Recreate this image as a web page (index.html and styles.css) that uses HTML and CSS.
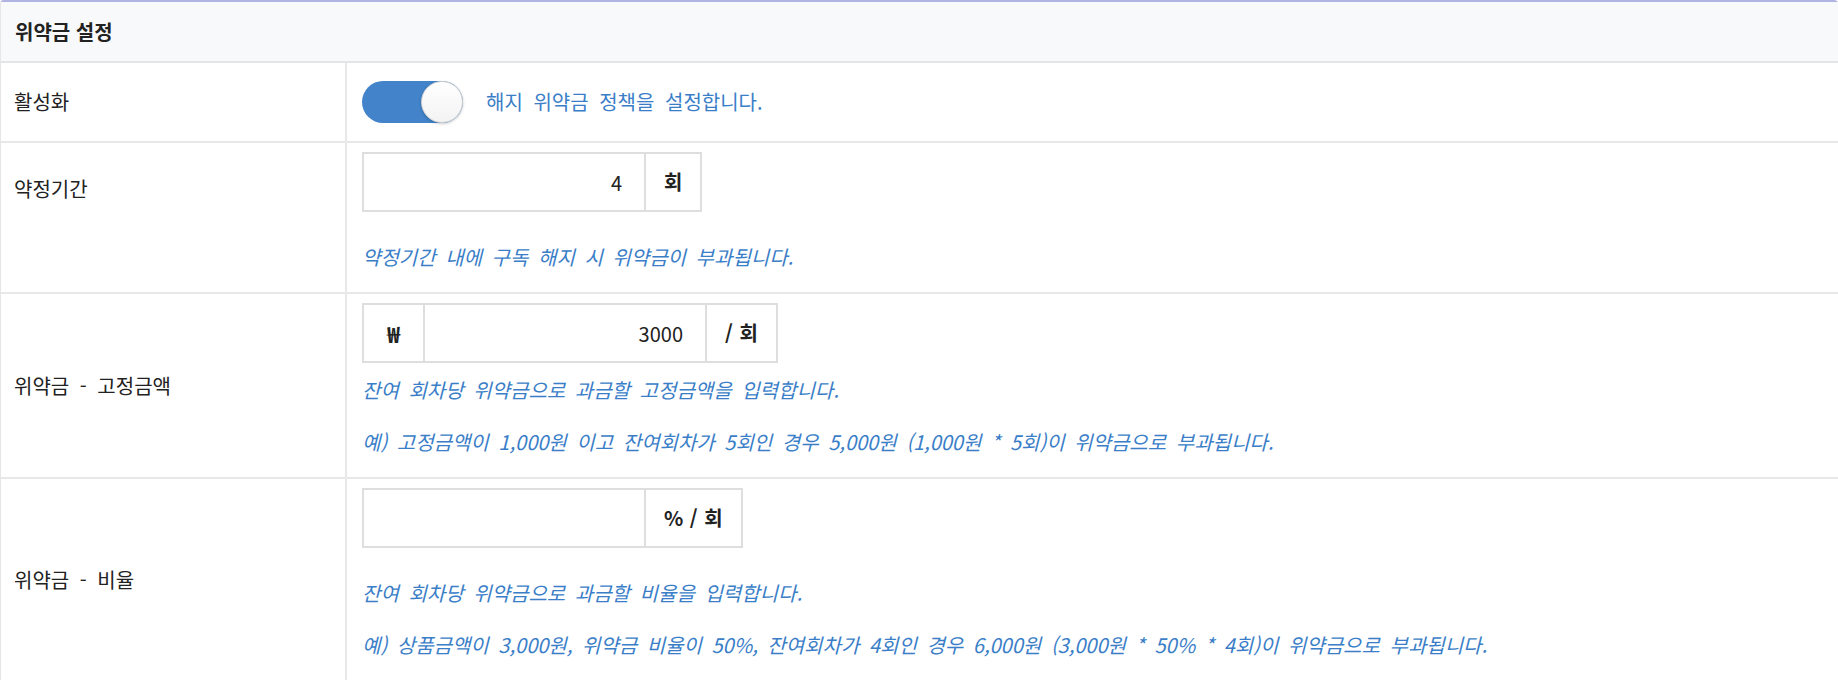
FILE: index.html
```html
<!DOCTYPE html>
<html lang="ko">
<head>
    <meta charset="UTF-8">
    <meta name="viewport" content="width=device-width, initial-scale=1.0">
    <title>위약금 설정</title>
    <link rel="stylesheet" href="styles.css">
</head>
<body>
    <div class="panel">
        <div class="panel-head">위약금 설정</div>

        <div class="row row-switch">
            <div class="row-label">활성화</div>
            <div class="row-body">
                <label class="switch">
                    <input type="checkbox" checked>
                    <span class="switch-track"></span>
                </label>
                <span class="switch-text">해지 위약금 정책을 설정합니다.</span>
            </div>
        </div>

        <div class="row">
            <div class="row-label row-label-top">약정기간</div>
            <div class="row-body">
                <div class="input-group spaced">
                    <input class="num" type="text" value="4">
                    <span class="addon">회</span>
                </div>
                <p class="help">약정기간 내에 구독 해지 시 위약금이 부과됩니다.</p>
            </div>
        </div>

        <div class="row">
            <div class="row-label">위약금 - 고정금액</div>
            <div class="row-body">
                <div class="input-group">
                    <span class="addon addon-first">₩</span>
                    <input class="num" type="text" value="3000">
                    <span class="addon">/ 회</span>
                </div>
                <p class="help">잔여 회차당 위약금으로 과금할 고정금액을 입력합니다.</p>
                <p class="help">예) 고정금액이 1,000원 이고 잔여회차가 5회인 경우 5,000원 (1,000원 * 5회)이 위약금으로 부과됩니다.</p>
            </div>
        </div>

        <div class="row">
            <div class="row-label">위약금 - 비율</div>
            <div class="row-body">
                <div class="input-group spaced">
                    <input class="num" type="text" value="">
                    <span class="addon">% / 회</span>
                </div>
                <p class="help">잔여 회차당 위약금으로 과금할 비율을 입력합니다.</p>
                <p class="help">예) 상품금액이 3,000원, 위약금 비율이 50%, 잔여회차가 4회인 경우 6,000원 (3,000원 * 50% * 4회)이 위약금으로 부과됩니다.</p>
            </div>
        </div>
    </div>
</body>
</html>
```

FILE: styles.css
```css
body {
    margin: 0;
    font-family: "Noto Sans CJK KR", "Noto Sans", sans-serif;
    color: #222;
    background: #fff;
}
.panel {
    border-top: 2px solid #b1b3e2;
    border-left: 1px solid #e6e6e6;
    border-radius: 4px 4px 0 0;
}
.panel-head {
    background: #f8f9fa;
    padding: 15px 14px 14px;
    font-size: 20px;
    line-height: 30px;
    font-weight: bold;
    border-bottom: 2px solid #e4e5e7;
}
.row {
    display: grid;
    grid-template-columns: 346px 1fr;
    border-bottom: 2px solid #e8e8e8;
    font-size: 20px;
    line-height: 30px;
    word-spacing: 5px;
}
.row-label {
    border-right: 2px solid #e8e8e8;
    padding: 0 13px;
    display: flex;
    align-items: center;
}
.row-label-top {
    align-items: flex-start;
    padding-top: 31px;
}
.row-body {
    padding: 9px 15px;
    display: flex;
    flex-direction: column;
    align-items: flex-start;
}
.row-switch .row-body {
    flex-direction: row;
    align-items: center;
    gap: 23px;
    padding: 18px 15px;
}
.switch-text {
    color: #3a7ec8;
}
.switch {
    position: relative;
    display: inline-block;
    width: 101px;
    height: 42px;
    cursor: pointer;
}
.switch input {
    display: none;
}
.switch-track {
    position: absolute;
    inset: 0;
    background: #4283c9;
    border-radius: 21px;
}
.switch-track::after {
    content: "";
    position: absolute;
    top: 0;
    right: 0;
    width: 42px;
    height: 42px;
    box-sizing: border-box;
    border-radius: 50%;
    background: linear-gradient(#fff, #f3f3f3);
    border: 1px solid #d2d2d2;
    box-shadow: 0 1px 3px rgba(0, 0, 0, 0.2);
}
.input-group {
    display: inline-flex;
    border: 2px solid #dedede;
    height: 56px;
}
.num {
    width: 280px;
    height: 56px;
    box-sizing: border-box;
    border: 0;
    padding: 0 22px;
    font: inherit;
    color: #222;
    text-align: right;
    outline: none;
}
.addon {
    display: flex;
    align-items: center;
    padding: 0 18px;
    font-weight: bold;
    word-spacing: 1px;
    border-left: 2px solid #dedede;
}
.addon-first {
    border-left: 0;
    border-right: 2px solid #dedede;
    padding: 0 23px;
    font-size: 22px;
}
.help {
    margin: 12px 0 11px;
    color: #3a7ec8;
    font-style: italic;
    word-spacing: 4px;
}
.help + .help {
    margin-top: 11px;
}
.spaced + .help {
    margin-top: 30px;
}
```
